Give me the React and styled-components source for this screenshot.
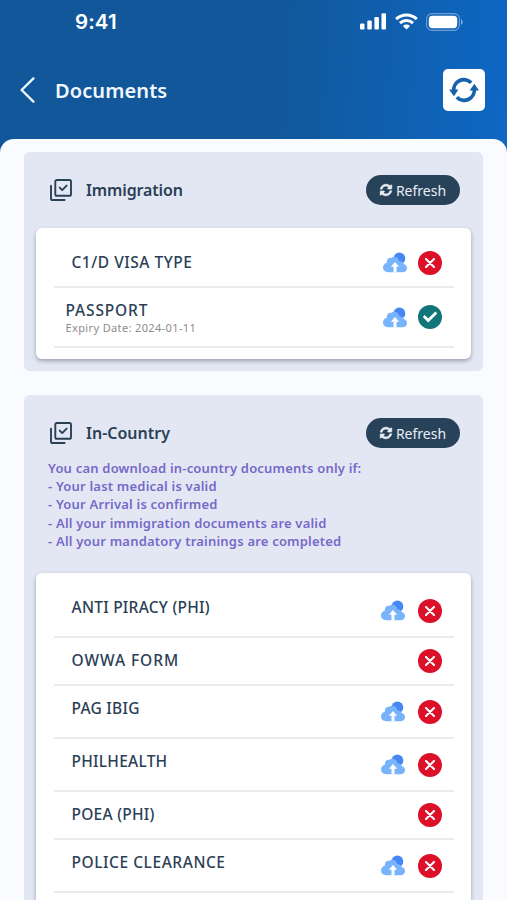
import React from "react";
import styled, { createGlobalStyle } from "styled-components";
import { FaCheck, FaSyncAlt } from "react-icons/fa";

const GlobalStyle = createGlobalStyle`
  * {
    box-sizing: border-box;
  }

  body {
    margin: 0;
    height: 900px;
    overflow: hidden;
    font-family: "Noto Sans", "Open Sans", sans-serif;
    color: #2b4055;
  }
`;

const Screen = styled.div`
  display: flex;
  flex-direction: column;
  width: 507px;
  height: 900px;
  overflow: hidden;
  background: linear-gradient(94deg, #125799 0%, #125799 48%, #0d69c8 95%);
`;

const StatusBar = styled.div`
  display: flex;
  align-items: center;
  justify-content: space-between;
  height: 43px;
  padding: 0 44px 0 75px;
  color: #fff;
`;

const Clock = styled.span`
  font-family: Inter, sans-serif;
  font-size: 20.5px;
  font-weight: 600;
  letter-spacing: 0.1px;
`;

const StatusIcons = styled.div`
  display: flex;
  align-items: center;
  gap: 8.5px;
`;

const TopBar = styled.header`
  display: flex;
  align-items: center;
  height: 96px;
  padding: 0 22px 2px 20px;
`;

const BackButton = styled.button`
  display: flex;
  width: 35px;
  padding: 0;
  border: none;
  background: none;
`;

const PageTitle = styled.h1`
  flex: 1;
  margin: 0;
  font-size: 20px;
  font-weight: 600;
  letter-spacing: 0.1px;
  color: #f1f7fd;
`;

const SyncButton = styled.button`
  display: flex;
  align-items: center;
  justify-content: center;
  width: 42px;
  height: 42px;
  padding: 0;
  border: none;
  border-radius: 5px;
  background: #fff;
`;

const Sheet = styled.main`
  flex: 1;
  display: flex;
  flex-direction: column;
  gap: 24px;
  min-height: 0;
  padding: 13px 24px 0;
  border-radius: 14px 14px 0 0;
  background: #fafbfe;
  overflow: hidden;
`;

const Section = styled.section`
  flex: none;
  padding: 0 12px 12px;
  border-radius: 6px;
  background: #e3e7f4;
`;

const SectionHeader = styled.div`
  display: flex;
  align-items: center;
  height: 76px;
  padding: 0 11px 0 14px;
`;

const SectionTitle = styled.h2`
  flex: 1;
  margin: 0 0 0 14px;
  font-size: 16px;
  font-weight: 600;
  letter-spacing: ${(props) => props.$tracking || "0"};
`;

const RefreshButton = styled.button`
  display: flex;
  align-items: center;
  justify-content: center;
  gap: 4px;
  width: 94px;
  height: 30px;
  padding: 0;
  border: none;
  border-radius: 15px;
  background: #28425a;
  color: #e9eff5;
  font-family: inherit;
  font-size: 14px;
`;

const RefreshIcon = styled(FaSyncAlt)`
  stroke: currentColor;
  stroke-width: 26px;
  overflow: visible;
`;

const Notice = styled.div`
  margin-top: -12px;
  padding: 0 12px 23px;
  font-size: 13px;
  font-weight: 600;
  line-height: 18.2px;
  color: #7669c8;
`;

const NoticeLine = styled.div`
  white-space: nowrap;
  letter-spacing: 0.2px;
`;

const List = styled.div`
  padding: ${(props) => props.$padding};
  border-radius: 6px;
  background: #fff;
  box-shadow: 0 2px 4px rgba(40, 50, 70, 0.4);
`;

const Row = styled.div`
  display: flex;
  align-items: center;
  height: ${(props) => props.$height}px;
  padding: ${(props) => props.$padding || "0 12px 0 17.5px"};
  border-bottom: 2px solid #e9ebed;
`;

const RowText = styled.div`
  flex: 1;
  margin-bottom: ${(props) => props.$lift || 0}px;
`;

const RowTitle = styled.div`
  font-size: 15.5px;
  font-weight: 500;
  line-height: 20px;
  white-space: nowrap;
  letter-spacing: ${(props) => props.$tracking}px;
`;

const Expiry = styled.div`
  font-size: 11px;
  line-height: 15px;
  color: #8b8d90;
  letter-spacing: 0.37px;
`;

const RowActions = styled.div`
  display: flex;
  align-items: center;
  gap: ${(props) => props.$gap}px;
`;

const Badge = styled.span`
  display: flex;
  align-items: center;
  justify-content: center;
  width: 24px;
  height: 24px;
  border-radius: 50%;
  background: ${(props) => (props.$valid ? "#12757a" : "#dc1029")};
  color: #fff;
`;

const SignalIcon = () => (
  <svg width="26" height="17" viewBox="0 0 26 17" fill="#fff">
    <rect x="0" y="10.5" width="4.5" height="6" rx="1.2" />
    <rect x="7.3" y="7.5" width="4.5" height="9" rx="1.2" />
    <rect x="14.4" y="4" width="4.5" height="12.5" rx="1.2" />
    <rect x="21.5" y="0.3" width="4.5" height="16.2" rx="1.2" />
  </svg>
);

const WifiIcon = () => (
  <svg width="23" height="17" viewBox="0 0 23 17" fill="none" stroke="#fff">
    <path d="M1.2 6.1a15 15 0 0 1 20.6 0" strokeWidth="3.2" />
    <path d="M5 10.2a9.4 9.4 0 0 1 13 0" strokeWidth="3" />
    <path
      d="M11.5 16.6 7.9 13a5.2 5.2 0 0 1 7.2 0z"
      fill="#fff"
      stroke="none"
    />
  </svg>
);

const BatteryIcon = () => (
  <svg width="37" height="18" viewBox="0 0 37 18">
    <rect
      x="0.6"
      y="0.6"
      width="32.8"
      height="16.8"
      rx="5.5"
      fill="none"
      stroke="#fff"
      strokeOpacity="0.4"
      strokeWidth="1.1"
    />
    <rect x="2.8" y="2.8" width="28.4" height="12.4" rx="3.6" fill="#fff" />
    <path d="M35 6.2c2.2 1.2 2.2 4.4 0 5.6z" fill="#fff" fillOpacity="0.5" />
  </svg>
);

const BackIcon = () => (
  <svg width="16" height="26" viewBox="0 0 16 26" fill="none" stroke="#f1f7fd">
    <path
      d="M13.4 1.4 1.6 13l11.8 11.6"
      strokeWidth="2.4"
      strokeLinecap="round"
      strokeLinejoin="round"
    />
  </svg>
);

const SyncIcon = () => (
  <svg width="30" height="26" viewBox="0 0 30 26" fill="none">
    <path
      d="M4.8 14.5A10.2 10.2 0 0 1 22.2 5.8M25.2 11.5A10.2 10.2 0 0 1 7.8 20.2"
      stroke="#1762ad"
      strokeWidth="3.7"
    />
    <path d="M0 12.6h9.4L5 19.2zM20.6 13.4H30L25.4 6.8z" fill="#1762ad" />
  </svg>
);

const ChecklistIcon = () => (
  <svg
    width="22"
    height="22"
    viewBox="0 0 22 22"
    fill="none"
    stroke="#2b4055"
    strokeWidth="1.9"
    strokeLinecap="round"
    strokeLinejoin="round"
  >
    <rect x="5.3" y="1" width="15.7" height="15.8" rx="1.6" />
    <path d="M9.7 8.6l2.5 2.5 4.4-4.5" />
    <path d="M1 6.8v12.6A1.6 1.6 0 0 0 2.6 21h12" />
  </svg>
);

const CloudUploadIcon = () => (
  <svg width="24" height="21" viewBox="0 0 24 21">
    <circle cx="16.4" cy="6.4" r="5.9" fill="#4687f5" />
    <path
      d="M5.2 20.3C2.2 20.3 0 18.3 0 15.6c0-2.5 1.6-4.3 3.9-4.8C3.5 7.6 5.6 5.6 8.3 5.9 9.3 4.9 10.6 4.5 12 4.8c2.2.5 3.8 2.2 4.5 4.4 2.1-.1 3.7 1 4.3 2.7 2 .7 3.2 2.2 3.2 4 0 2.6-2 4.4-4.8 4.4z"
      fill="#78b4fc"
    />
    <path d="M12 10l4.2 4.8h-2.7v5.6h-3v-5.6H7.8z" fill="#fff" />
  </svg>
);

const CrossIcon = () => (
  <svg width="10" height="10" viewBox="0 0 10 10" stroke="#fff">
    <path d="M1 1l8 8M9 1L1 9" strokeWidth="2.1" strokeLinecap="round" />
  </svg>
);

const immigrationDocs = [
  {
    name: "C1/D VISA TYPE",
    height: 60,
    padding: "11px 12px 0 17.5px",
    tracking: 0.52,
    upload: true,
    lift: 2,
  },
  {
    name: "PASSPORT",
    expiry: "2024-01-11",
    height: 60,
    padding: "0 12px 0 11.5px",
    tracking: 0.85,
    upload: true,
    valid: true,
  },
];

const countryDocs = [
  { name: "ANTI PIRACY (PHI)", height: 53, tracking: 0.25, upload: true },
  { name: "OWWA FORM", height: 48, tracking: 0.95 },
  { name: "PAG IBIG", height: 53, tracking: 0.25, upload: true },
  { name: "PHILHEALTH", height: 53, tracking: 0.25, upload: true },
  { name: "POEA (PHI)", height: 48, tracking: 0.25 },
  { name: "POLICE CLEARANCE", height: 53, tracking: 0.55, upload: true },
];

const conditions = [
  "You can download in-country documents only if:",
  "- Your last medical is valid",
  "- Your Arrival is confirmed",
  "- All your immigration documents are valid",
  "- All your mandatory trainings are completed",
];

const DocumentRow = ({ doc, gap, lift }) => (
  <Row $height={doc.height} $padding={doc.padding}>
    <RowText $lift={lift}>
      <RowTitle $tracking={doc.tracking}>{doc.name}</RowTitle>
      {doc.expiry && <Expiry>Expiry Date: {doc.expiry}</Expiry>}
    </RowText>
    <RowActions $gap={gap}>
      {doc.upload && <CloudUploadIcon />}
      <Badge $valid={doc.valid}>
        {doc.valid ? <FaCheck size={14} /> : <CrossIcon />}
      </Badge>
    </RowActions>
  </Row>
);

const Refresh = () => (
  <RefreshButton>
    <RefreshIcon size={12} />
    Refresh
  </RefreshButton>
);

const App = () => {
  return (
    <>
      <GlobalStyle />
      <Screen>
        <StatusBar>
          <Clock>9:41</Clock>
          <StatusIcons>
            <SignalIcon />
            <WifiIcon />
            <BatteryIcon />
          </StatusIcons>
        </StatusBar>
        <TopBar>
          <BackButton aria-label="Back">
            <BackIcon />
          </BackButton>
          <PageTitle>Documents</PageTitle>
          <SyncButton aria-label="Sync">
            <SyncIcon />
          </SyncButton>
        </TopBar>

        <Sheet>
          <Section>
            <SectionHeader>
              <ChecklistIcon />
              <SectionTitle $tracking="-0.13px">Immigration</SectionTitle>
              <Refresh />
            </SectionHeader>
            <List $padding="0 17px 11px 18px">
              {immigrationDocs.map((doc) => (
                <DocumentRow key={doc.name} doc={doc} gap={11} lift={doc.lift} />
              ))}
            </List>
          </Section>

          <Section>
            <SectionHeader>
              <ChecklistIcon />
              <SectionTitle>In-Country</SectionTitle>
              <Refresh />
            </SectionHeader>
            <Notice>
              {conditions.map((line) => (
                <NoticeLine key={line}>{line}</NoticeLine>
              ))}
            </Notice>
            <List $padding="12px 17px 12px 18px">
              {countryDocs.map((doc) => (
                <DocumentRow
                  key={doc.name}
                  doc={doc}
                  gap={13}
                  lift={doc.upload ? 7 : 3}
                />
              ))}
            </List>
          </Section>
        </Sheet>
      </Screen>
    </>
  );
};

export default App;
